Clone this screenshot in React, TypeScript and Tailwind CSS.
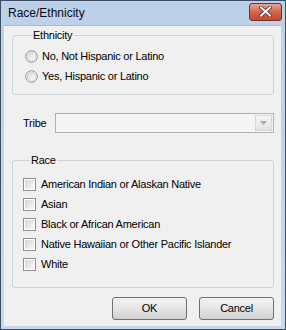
import React from "react";

function Radio() {
  return (
    <svg width="13" height="13" viewBox="0 0 13 13" className="shrink-0">
      <defs>
        <linearGradient id="rg" x1="0" y1="0" x2="1" y2="1">
          <stop offset="0" stopColor="#d6d6d6" />
          <stop offset="1" stopColor="#ffffff" />
        </linearGradient>
      </defs>
      <circle cx="6.5" cy="6.5" r="5.8" fill="#f4f4f4" stroke="#8f8f8f" strokeWidth="1" />
      <circle cx="6.5" cy="6.5" r="4.2" fill="url(#rg)" stroke="#c4c4c4" strokeWidth="0.6" />
    </svg>
  );
}

function Check() {
  return (
    <div className="w-[13px] h-[13px] shrink-0 border border-[#8f8f8f] bg-white p-[1px]">
      <div className="w-full h-full bg-gradient-to-br from-[#d4d4d4] to-[#fbfbfb]" />
    </div>
  );
}

function GroupBox({ label, children, className }: { label: string; children: React.ReactNode; className: string }) {
  return (
    <fieldset className={"border border-[#cdd3d8] rounded-[3px] " + className}>
      <legend className="ml-[7px] px-[1px] leading-[13px]">{label}</legend>
      {children}
    </fieldset>
  );
}

function Button({ children }: { children: React.ReactNode }) {
  return (
    <div className="w-[75px] h-[23px] rounded-[3px] border border-[#707070] bg-gradient-to-b from-[#f2f2f2] via-[#e6e6e6] to-[#d0d0d0] flex items-center justify-center">
      {children}
    </div>
  );
}

export default function App() {
  const races = [
    "American Indian or Alaskan Native",
    "Asian",
    "Black or African American",
    "Native Hawaiian or Other Pacific Islander",
    "White",
  ];
  return (
    <div
      className="w-[286px] h-[330px] border border-[#3b4e63] bg-gradient-to-b from-[#bcd0e9] to-[#c8daee] flex flex-col text-black"
      style={{ fontFamily: '"Liberation Sans", Arial, sans-serif' }}
    >
      <div className="h-[24px] flex items-center pl-[7px] pr-[3px] text-[12px] shrink-0 relative">
        <span className="leading-[14px] text-[#0b0b0b]">Race/Ethnicity</span>
        <div className="ml-auto mt-[-3px] w-[33px] h-[18px] rounded-[3px] border border-[#7a2d22] bg-gradient-to-b from-[#e6a696] via-[#d0654b] to-[#c24a2c] flex items-center justify-center">
          <svg width="13" height="11" viewBox="0 0 13 11">
            <path d="M2 1.5 L11 9.5 M11 1.5 L2 9.5" stroke="#5a2a22" strokeWidth="3.6" strokeLinecap="square" />
            <path d="M2 1.5 L11 9.5 M11 1.5 L2 9.5" stroke="#ffffff" strokeWidth="2" strokeLinecap="square" />
          </svg>
        </div>
      </div>
      <div className="flex-1 ml-[3px] mr-[4px] mb-[3px] bg-[#f0f0f0] border-t border-[#a9bccf] flex flex-col pl-[8px] pr-[7px] text-[11px] leading-[13px] tracking-[-0.25px]">
        <GroupBox label="Ethnicity" className="mt-[3px] pt-[4px] pb-[8px] px-[12px]">
          <div className="h-[20px] flex items-center gap-[4px]">
            <Radio />
            <span>No, Not Hispanic or Latino</span>
          </div>
          <div className="h-[20px] flex items-center gap-[4px]">
            <Radio />
            <span>Yes, Hispanic or Latino</span>
          </div>
        </GroupBox>
        <div className="mt-[18px] h-[20px] flex items-center">
          <span className="pl-[11px] w-[43px]">Tribe</span>
          <div className="flex-1 h-[20px] border border-[#adb2b5] bg-[#f4f4f4] flex justify-end p-[1px]">
            <div className="w-[17px] h-full border border-[#d6d6d6] bg-gradient-to-b from-[#f4f4f4] to-[#e4e4e4] flex items-center justify-center">
              <svg width="7" height="4" viewBox="0 0 7 4">
                <path d="M0 0 L7 0 L3.5 4 Z" fill="#a8a8a8" />
              </svg>
            </div>
          </div>
        </div>
        <GroupBox label="Race" className="mt-[21px] pt-[7px] pb-[13px] pl-[10px] pr-[8px]">
          {races.map((r) => (
            <div key={r} className="h-[20px] flex items-center gap-[5px]">
              <Check />
              <span>{r}</span>
            </div>
          ))}
        </GroupBox>
        <div className="mt-[9px] flex justify-end gap-[12px]">
          <Button>OK</Button>
          <Button>Cancel</Button>
        </div>
      </div>
    </div>
  );
}
